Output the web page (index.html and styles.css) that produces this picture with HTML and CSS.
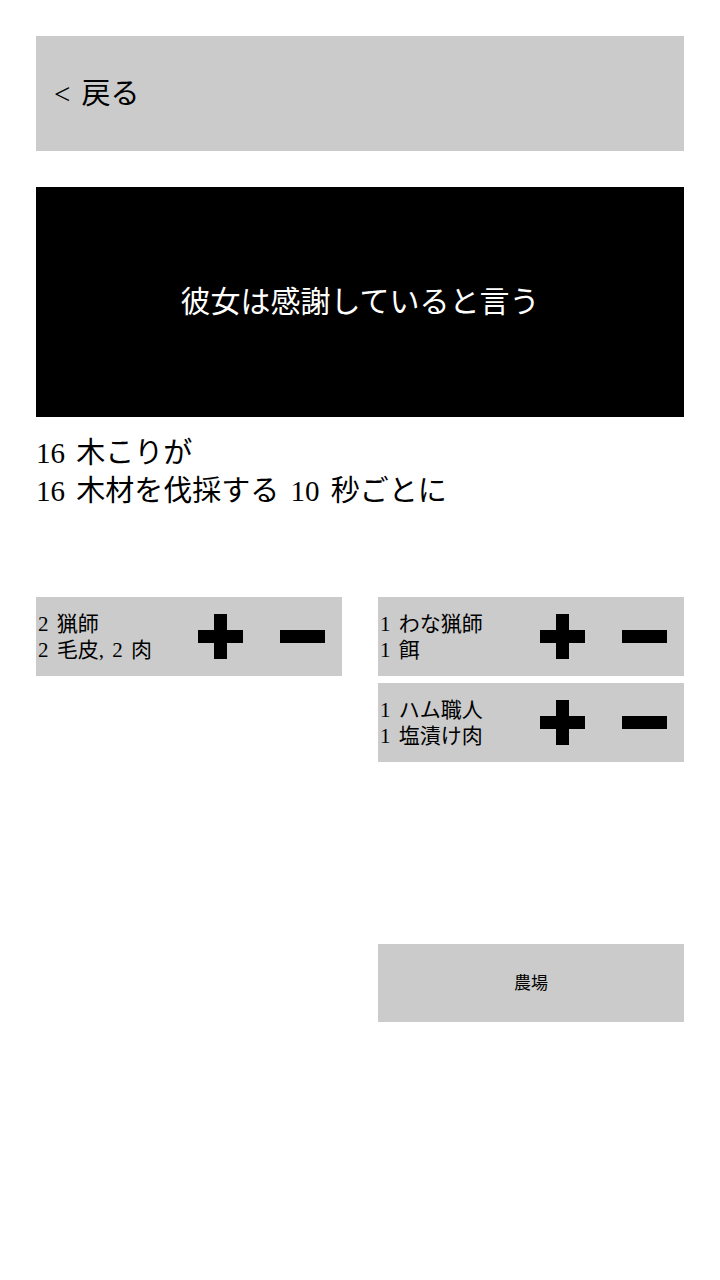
FILE: index.html
```html
<!DOCTYPE html>
<html lang="ja">
<head>
<meta charset="utf-8">
<link rel="stylesheet" href="styles.css">
</head>
<body>
<div class="page">
  <div class="back">&lt; 戻る</div>
  <div class="banner">彼女は感謝していると言う</div>
  <div class="info">
    <div>16 木こりが</div>
    <div>16 木材を伐採する 10 秒ごとに</div>
  </div>
  <div class="grid">
    <div class="col">
      <div class="card">
        <div class="txt"><div>2 猟師</div><div>2 毛皮, 2 肉</div></div>
        <svg class="icon" viewBox="0 0 45 45"><path d="M16 0h13v16h16v13H29v16H16V29H0V16h16z" fill="#000"/></svg>
        <svg class="icon" viewBox="0 0 45 45"><rect x="0" y="16" width="45" height="13" fill="#000"/></svg>
      </div>
    </div>
    <div class="col">
      <div class="card">
        <div class="txt"><div>1 わな猟師</div><div>1 餌</div></div>
        <svg class="icon" viewBox="0 0 45 45"><path d="M16 0h13v16h16v13H29v16H16V29H0V16h16z" fill="#000"/></svg>
        <svg class="icon" viewBox="0 0 45 45"><rect x="0" y="16" width="45" height="13" fill="#000"/></svg>
      </div>
      <div class="card">
        <div class="txt"><div>1 ハム職人</div><div>1 塩漬け肉</div></div>
        <svg class="icon" viewBox="0 0 45 45"><path d="M16 0h13v16h16v13H29v16H16V29H0V16h16z" fill="#000"/></svg>
        <svg class="icon" viewBox="0 0 45 45"><rect x="0" y="16" width="45" height="13" fill="#000"/></svg>
      </div>
      <div class="farm">農場</div>
    </div>
  </div>
</div>
</body>
</html>
```
FILE: styles.css
```css
html, body {
  margin: 0;
  padding: 0;
  background: #fff;
}
body {
  font-family: "Liberation Serif", "Noto Sans CJK JP", serif;
  color: #000;
}
.page {
  padding: 36px;
}
.back {
  height: 115px;
  background: #cbcbcb;
  display: flex;
  align-items: center;
  padding: 0 0 6px 18px;
  font-size: 29px;
  word-spacing: 4px;
  box-sizing: border-box;
}
.banner {
  margin-top: 36px;
  height: 230px;
  background: #000;
  color: #fff;
  display: flex;
  align-items: center;
  justify-content: center;
  padding-bottom: 6px;
  box-sizing: border-box;
  font-size: 30px;
}
.info {
  margin-top: 17px;
  font-size: 29px;
  line-height: 38px;
  word-spacing: 4px;
}
.grid {
  margin-top: 87px;
  display: grid;
  grid-template-columns: 1fr 1fr;
  column-gap: 36px;
  align-items: start;
}
.col {
  display: flex;
  flex-direction: column;
  gap: 7px;
}
.card {
  height: 79px;
  background: #cbcbcb;
  display: flex;
  align-items: center;
  padding: 0 17px 0 2px;
  box-sizing: border-box;
}
.txt {
  flex: 1;
  font-size: 21px;
  line-height: 26px;
  word-spacing: 3px;
}
.icon {
  width: 45px;
  height: 45px;
  flex: none;
}
.icon + .icon {
  margin-left: 37px;
}
.farm {
  margin-top: 175px;
  height: 78px;
  background: #cbcbcb;
  display: flex;
  align-items: center;
  justify-content: center;
  padding-bottom: 3px;
  box-sizing: border-box;
  font-size: 17px;
}
```
